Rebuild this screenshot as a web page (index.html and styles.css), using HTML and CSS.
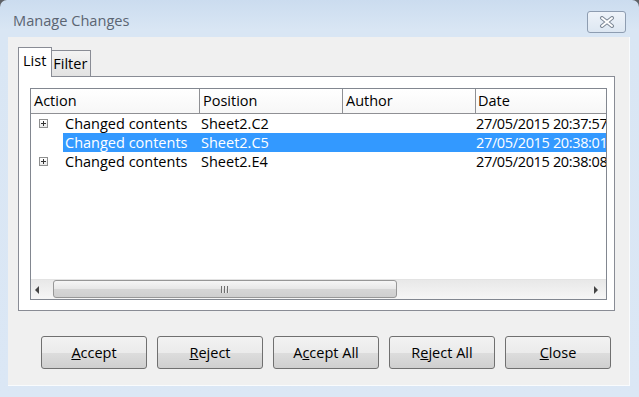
FILE: index.html
```html
<!DOCTYPE html>
<html lang="en">
<head>
  <meta charset="UTF-8">
  <title>Manage Changes</title>
  <link rel="stylesheet" href="styles.css">
</head>
<body>
  <div class="window">
    <div class="titlebar">
      <span class="title">Manage Changes</span>
      <div class="close">
        <svg width="16" height="12" viewBox="0 0 16 12">
          <path d="M3 2 L13 10 M13 2 L3 10" stroke="#7d8896" stroke-width="4" stroke-linecap="round"/>
          <path d="M3 2 L13 10 M13 2 L3 10" stroke="#fff" stroke-width="2" stroke-linecap="round"/>
        </svg>
      </div>
    </div>
    <div class="client">
      <div class="tabs">
        <div class="tab active">List</div>
        <div class="tab">Filter</div>
      </div>
      <div class="panel">
        <div class="list">
          <div class="list-head">
            <div class="col">Action</div>
            <div class="col">Position</div>
            <div class="col">Author</div>
            <div class="col">Date</div>
          </div>
          <div class="rows">
            <div class="row">
              <div class="expander"><span class="plus"></span></div>
              <div class="cells">
                <span class="first">Changed contents</span><span>Sheet2.C2</span><span></span><span>27/05/2015 20:37:57</span>
              </div>
            </div>
            <div class="row selected">
              <div class="expander"></div>
              <div class="cells">
                <span class="first">Changed contents</span><span>Sheet2.C5</span><span></span><span>27/05/2015 20:38:01</span>
              </div>
            </div>
            <div class="row">
              <div class="expander"><span class="plus"></span></div>
              <div class="cells">
                <span class="first">Changed contents</span><span>Sheet2.E4</span><span></span><span>27/05/2015 20:38:08</span>
              </div>
            </div>
          </div>
          <div class="hscroll">
            <div class="arrow left"></div>
            <div class="track">
              <div class="thumb"><span class="grip"></span></div>
            </div>
            <div class="arrow right"></div>
          </div>
        </div>
      </div>
      <div class="buttons">
        <button class="btn"><u>A</u>ccept</button>
        <button class="btn"><u>R</u>eject</button>
        <button class="btn">A<u>c</u>cept All</button>
        <button class="btn">R<u>e</u>ject All</button>
        <button class="btn"><u>C</u>lose</button>
      </div>
    </div>
  </div>
</body>
</html>
```

FILE: styles.css
```css
body {
  margin: 0;
  background: #5e6166;
  font-family: "Open Sans", sans-serif;
  font-size: 14.5px;
  color: #000;
}
.window {
  width: 639px;
  height: 397px;
  box-sizing: border-box;
  padding: 0 9px 11px 8px;
  border-radius: 7px 7px 0 0;
  background: linear-gradient(#cbdcef, #d9e6f4 30px, #dbe7f5);
  display: flex;
  flex-direction: column;
}
.titlebar {
  height: 37px;
  flex: none;
  display: flex;
  justify-content: space-between;
  align-items: flex-start;
}
.title {
  margin: 10px 0 0 5px;
  font-size: 14.6px;
  color: #5b6572;
}
.close {
  margin: 11px 4px 0 0;
  width: 39px;
  height: 22px;
  box-sizing: border-box;
  border: 1px solid #8e9db1;
  border-radius: 3px;
  background: linear-gradient(#eef3f9, #dde7f2);
  display: flex;
  align-items: center;
  justify-content: center;
}
.client {
  flex: 1;
  background: #f0f0f0;
  border-right: 1px solid #f9fbfd;
  border-bottom: 1px solid #f9fbfd;
  padding: 10px 0 0 10px;
}
.tabs {
  display: flex;
  align-items: flex-end;
  height: 29px;
}
.tab {
  box-sizing: border-box;
  height: 26px;
  padding: 0 3px 0 1px;
  border: 1px solid #898c95;
  border-bottom: none;
  border-left: none;
  background: linear-gradient(#f3f3f3, #e2e2e2);
  line-height: 25px;
}
.tab.active {
  height: 30px;
  margin-bottom: -1px;
  padding: 0 5px 0 4px;
  border-left: 1px solid #898c95;
  background: #fff;
  position: relative;
  z-index: 1;
}
.panel {
  width: 597px;
  height: 235px;
  box-sizing: border-box;
  padding: 11px 7px 10px 11px;
  border: 1px solid #898c95;
  background: #fff;
}
.list {
  height: 212px;
  box-sizing: border-box;
  border: 1px solid #828790;
  display: flex;
  flex-direction: column;
}
.list-head {
  height: 25px;
  flex: none;
  box-sizing: border-box;
  display: grid;
  grid-template-columns: 169px 143px 133px 1fr;
  border-bottom: 1px solid #8f9094;
  background: linear-gradient(#fff, #f7f7f7);
}
.col {
  padding-left: 3px;
  line-height: 24px;
  border-right: 1px solid #8f9094;
}
.col:last-child {
  border-right: none;
  padding-left: 2px;
}
.rows {
  flex: 1;
}
.row {
  display: flex;
  height: 19px;
  line-height: 19px;
}
.expander {
  width: 32px;
  flex: none;
  display: flex;
  align-items: center;
}
.plus {
  margin-left: 8px;
  width: 9px;
  height: 9px;
  box-sizing: border-box;
  border: 1px solid #8e8f8f;
  background: linear-gradient(#fff, #e9e9e9);
  position: relative;
}
.plus::before,
.plus::after {
  content: "";
  position: absolute;
  background: #333;
}
.plus::before {
  left: 1px;
  top: 3px;
  width: 5px;
  height: 1px;
}
.plus::after {
  left: 3px;
  top: 1px;
  width: 1px;
  height: 5px;
}
.cells {
  flex: 1;
  display: grid;
  grid-template-columns: 137px 143px 133px 1fr;
  white-space: nowrap;
  overflow: hidden;
}
.cells span {
  padding-left: 1px;
  overflow: hidden;
}
.cells span:last-child {
  padding-left: 0;
  letter-spacing: -0.35px;
}
.cells .first {
  padding-left: 2px;
}
.row.selected .cells {
  background: #3399ff;
  color: #fff;
}
.hscroll {
  height: 20px;
  flex: none;
  box-sizing: border-box;
  display: flex;
  border-top: 1px solid #e3e3e3;
  background: linear-gradient(#e8e8e8, #f6f6f6);
}
.arrow {
  width: 22px;
  position: relative;
}
.arrow::after {
  content: "";
  position: absolute;
  top: 6px;
  border: 4px solid transparent;
}
.arrow.left::after {
  left: 4px;
  border-right: 4px solid #444;
  border-left: none;
}
.arrow.right {
  width: 18px;
}
.arrow.right::after {
  left: 6px;
  border-left: 4px solid #444;
  border-right: none;
}
.track {
  flex: 1;
}
.thumb {
  width: 344px;
  height: 18px;
  box-sizing: border-box;
  border: 1px solid #979797;
  border-radius: 3px;
  background: linear-gradient(#f6f6f6, #e7e7e7 50%, #d6d6d6 51%, #cfcfcf);
  display: flex;
  justify-content: center;
  align-items: center;
}
.grip {
  width: 8px;
  height: 7px;
  background: repeating-linear-gradient(90deg, #6e6e6e 0 1px, #e8e8e8 1px 2px, transparent 2px 3px);
}
.buttons {
  display: flex;
  gap: 10px;
  margin: 25px 0 0 23px;
}
.btn {
  width: 106px;
  height: 33px;
  padding: 0;
  border: 1px solid #707070;
  border-radius: 3px;
  background: linear-gradient(#f2f2f2, #ebebeb 50%, #dddddd 51%, #cfcfcf);
  font-family: "Open Sans", sans-serif;
  font-size: 14.5px;
  color: #000;
}
```
